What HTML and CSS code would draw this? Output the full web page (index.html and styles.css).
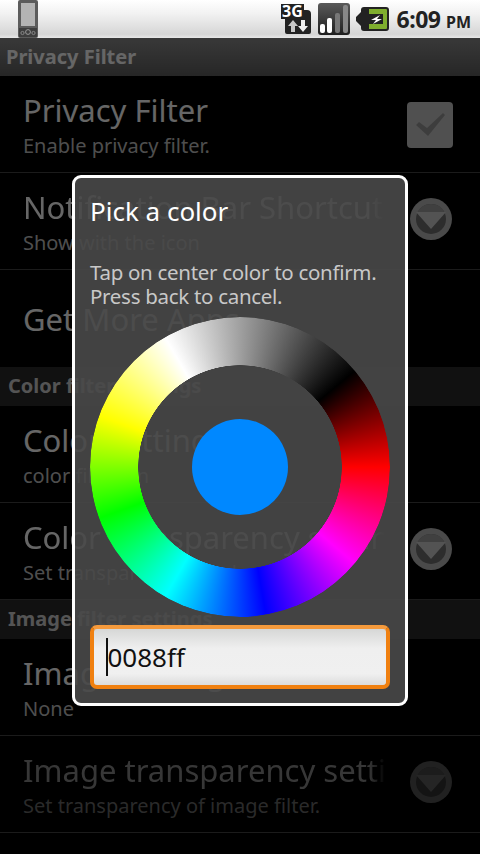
FILE: index.html
```html
<!DOCTYPE html>
<html lang="en">

<head>
  <meta charset="UTF-8">
  <meta name="viewport" content="width=device-width, initial-scale=1.0">
  <title>Privacy Filter</title>
  <link rel="stylesheet" href="styles.css">
</head>

<body>
  <!-- status bar -->
  <div class="status">
    <svg class="phone" width="22" height="38" viewBox="0 0 22 38">
      <rect x="1" y="0" width="20" height="38" rx="2" fill="#5c5c5c"/>
      <rect x="4" y="3" width="14" height="23" fill="#b4b4b4"/>
      <rect x="2" y="28" width="18" height="9" fill="#3e3e3e"/>
      <circle cx="11" cy="32" r="2.4" fill="none" stroke="#999" stroke-width="1"/>
      <circle cx="5.5" cy="33" r="1.6" fill="none" stroke="#888" stroke-width="1"/>
      <circle cx="16.5" cy="33" r="1.6" fill="none" stroke="#888" stroke-width="1"/>
    </svg>
    <div class="status-icons">
      <svg width="32" height="32" viewBox="0 0 32 32">
        <path d="M1 1h23v6h3a4 4 0 0 1 4 4v18a2 2 0 0 1-2 2H7a2 2 0 0 1-2-2V16H1z" fill="#222"/>
        <text x="2" y="14" class="net-label">3G</text>
        <path d="M11 29v-6H8l5-6 5 6h-3v6z" fill="#c8c8c8"/>
        <path d="M21 17h4v6h3l-5 6-5-6h3z" fill="#eee"/>
      </svg>
      <svg width="32" height="32" viewBox="0 0 32 32">
        <defs>
          <linearGradient id="sig" x1="0" y1="0" x2="0" y2="1">
            <stop offset="0" stop-color="#5a5a5a"/>
            <stop offset="1" stop-color="#1e1e1e"/>
          </linearGradient>
        </defs>
        <rect width="32" height="32" rx="3" fill="url(#sig)"/>
        <rect x="2" y="21" width="5" height="9" rx="2" fill="#fff"/>
        <rect x="9" y="15" width="5" height="15" rx="2" fill="#fff"/>
        <rect x="17" y="10" width="5" height="20" rx="2" fill="#777"/>
        <rect x="25" y="2" width="5" height="28" rx="2" fill="#888"/>
      </svg>
      <svg class="battery" width="33" height="24" viewBox="0 0 33 24">
        <path d="M0 10l5-5V3a3 3 0 0 1 3-3h22a3 3 0 0 1 3 3v18a3 3 0 0 1-3 3H8a3 3 0 0 1-3-3v-2l-5-5z" fill="#222"/>
        <path d="M13 2h17a1 1 0 0 1 1 1v18a1 1 0 0 1-1 1H13v-5h14V7H13z" fill="#7fae2e"/>
        <path d="M24 8l-9 5h5l-3 4 9-5h-5z" fill="#fff"/>
      </svg>
    </div>
    <div class="clock">6:09 <span class="ampm">PM</span></div>
  </div>

  <div class="app">
    <div class="titlebar">Privacy Filter</div>

    <div class="row">
      <div class="text">
        <div class="name">Privacy Filter</div>
        <div class="desc">Enable privacy filter.</div>
      </div>
      <svg class="widget check" width="46" height="46" viewBox="0 0 46 46">
        <rect width="46" height="46" rx="4" fill="#c8c8c8"/>
        <path d="M9 23l3-3 8 6L36 11l2 2-17 21z" fill="#9a9a9a"/>
      </svg>
    </div>
    <div class="row">
      <div class="text">
        <div class="name fade">Notification Bar Shortcut</div>
        <div class="desc">Show with the icon</div>
      </div>
      <svg class="widget drop" width="46" height="46" viewBox="0 0 46 46">
        <circle cx="23" cy="23" r="21" fill="#b8b8b8"/>
        <circle cx="23" cy="23" r="15" fill="#707070"/>
        <path d="M9.7 16A15 15 0 0 1 36.3 16z" fill="#a0a0a0"/>
        <path d="M8 16h30L23 33z" fill="#d0d0d0"/>
      </svg>
    </div>
    <div class="row last">
      <div class="text">
        <div class="name">Get More Apps</div>
      </div>
    </div>

    <div class="category">Color filter settings</div>
    <div class="row">
      <div class="text">
        <div class="name">Color settings</div>
        <div class="desc">color filter on</div>
      </div>
    </div>
    <div class="row">
      <div class="text">
        <div class="name fade">Color transparency setting</div>
        <div class="desc">Set transparency of color filter.</div>
      </div>
      <svg class="widget drop" width="46" height="46" viewBox="0 0 46 46">
        <circle cx="23" cy="23" r="21" fill="#b8b8b8"/>
        <circle cx="23" cy="23" r="15" fill="#707070"/>
        <path d="M9.7 16A15 15 0 0 1 36.3 16z" fill="#a0a0a0"/>
        <path d="M8 16h30L23 33z" fill="#d0d0d0"/>
      </svg>
    </div>

    <div class="category">Image filter settings</div>
    <div class="row">
      <div class="text">
        <div class="name">Image settings</div>
        <div class="desc">None</div>
      </div>
    </div>
    <div class="row off">
      <div class="text">
        <div class="name fade">Image transparency setting</div>
        <div class="desc">Set transparency of image filter.</div>
      </div>
      <svg class="widget drop" width="46" height="46" viewBox="0 0 46 46">
        <circle cx="23" cy="23" r="21" fill="#b8b8b8"/>
        <circle cx="23" cy="23" r="15" fill="#707070"/>
        <path d="M9.7 16A15 15 0 0 1 36.3 16z" fill="#a0a0a0"/>
        <path d="M8 16h30L23 33z" fill="#d0d0d0"/>
      </svg>
    </div>

    <!-- color picker dialog -->
    <div class="dim">
      <div class="dialog">
        <div class="dialog-title">Pick a color</div>
        <div class="dialog-msg">Tap on center color to confirm.<br>Press back to cancel.</div>
        <div class="wheel">
          <div class="ring"></div>
          <div class="swatch"></div>
        </div>
        <div class="field"><span class="caret"></span>0088ff</div>
      </div>
    </div>
  </div>
</body>

</html>
```

FILE: styles.css
```css
* {
  box-sizing: border-box;
}

html,
body {
  margin: 0;
  padding: 0;
  background-color: #000;
}

body {
  width: 480px;
  height: 854px;
  overflow: hidden;
  font-family: "Noto Sans", "Open Sans", sans-serif;
}

.status {
  display: flex;
  align-items: center;
  height: 38px;
  padding: 0 9px 0 17px;
  background: linear-gradient(#ffffff, #f2f2f2 35%, #d6d6d6 90%, #e8e8e8);
}

.phone {
  display: block;
}

.status-icons {
  display: flex;
  align-items: center;
  gap: 6px;
  margin-left: auto;
}

.status-icons svg {
  display: block;
}

.net-label {
  font-family: "Noto Sans", sans-serif;
  font-size: 16px;
  font-weight: bold;
  fill: #fff;
}

.clock {
  margin-left: 8px;
  color: #222;
  font-size: 23px;
  font-weight: bold;
  letter-spacing: -0.5px;
  white-space: nowrap;
}

.clock .ampm {
  font-size: 16px;
  letter-spacing: 0;
}

.app {
  position: relative;
  height: 816px;
}

.titlebar {
  height: 38px;
  padding-left: 6px;
  background: linear-gradient(#8e8e8e, #606060);
  color: #fff;
  font-size: 20px;
  font-weight: bold;
  line-height: 37px;
}

.row {
  display: flex;
  align-items: center;
  height: 97px;
  padding-left: 23px;
  border-bottom: 1px solid #454545;
}

.row.last {
  border-bottom: 0;
}

.text {
  width: 363px;
  flex: none;
  overflow: hidden;
}

.name {
  color: #fff;
  font-size: 31px;
  line-height: 42px;
  white-space: nowrap;
  overflow: hidden;
}

.name.fade {
  -webkit-mask-image: linear-gradient(to right, #000 346px, transparent);
  mask-image: linear-gradient(to right, #000 346px, transparent);
}

.desc {
  margin-top: 1px;
  color: #c4c4c4;
  font-size: 20px;
  line-height: 28px;
  white-space: nowrap;
}

.widget {
  display: block;
  margin-left: 22px;
}

.widget.check {
  margin-left: 21px;
  margin-top: 2px;
}

.widget.drop {
  margin-bottom: 4px;
}

.row.off .name {
  color: #8a8a8a;
}

.row.off .desc {
  color: #6a6a6a;
}

.row.off .widget {
  opacity: 0.45;
}

.category {
  height: 39px;
  padding-left: 8px;
  background-color: #2c2c2c;
  color: #d2d2d2;
  font-size: 20px;
  font-weight: bold;
  line-height: 38px;
}

/* everything under the dialog goes dark */
.dim {
  position: absolute;
  top: 0;
  left: 0;
  right: 0;
  bottom: 0;
  display: flex;
  justify-content: center;
  align-items: flex-start;
  padding-top: 137px;
  background-color: rgba(0, 0, 0, 0.6);
}

.dialog {
  width: 336px;
  height: 531px;
  padding: 0 15px;
  background-color: rgba(73, 73, 73, 0.9);
  border: 3px solid #fff;
  border-radius: 9px;
}

.dialog-title {
  margin-top: 14px;
  color: #fff;
  font-size: 26px;
  line-height: 38px;
}

.dialog-msg {
  margin-top: 30px;
  color: #c8c8c8;
  font-size: 20.5px;
  letter-spacing: -0.3px;
  line-height: 24px;
}

.wheel {
  display: grid;
  place-items: center;
  width: 300px;
  height: 300px;
  margin-top: 9px;
}

.ring,
.swatch {
  grid-area: 1 / 1;
  border-radius: 50%;
}

.ring {
  width: 300px;
  height: 300px;
  background: conic-gradient(from 90deg, #f00 0deg, #f0f 40deg, #00f 80deg, #0ff 120deg, #0f0 160deg, #ff0 200deg, #fff 240deg, #808080 280deg, #000 320deg, #f00 360deg);
  -webkit-mask-image: radial-gradient(circle, transparent 101.5px, #000 102px);
  mask-image: radial-gradient(circle, transparent 101.5px, #000 102px);
}

.swatch {
  width: 96px;
  height: 96px;
  background-color: #0088ff;
}

.field {
  display: flex;
  align-items: center;
  width: 300px;
  height: 64px;
  margin-top: 8px;
  padding-left: 12px;
  background: linear-gradient(#d6d7d6, #efefef 35%, #f0f0f0 80%, #dcdcdc);
  border: 4px solid #f08010;
  border-top-color: #f59a3c;
  border-radius: 7px;
  color: #111;
  font-size: 26px;
}

.caret {
  width: 1.5px;
  height: 38px;
  background-color: #111;
}
```
